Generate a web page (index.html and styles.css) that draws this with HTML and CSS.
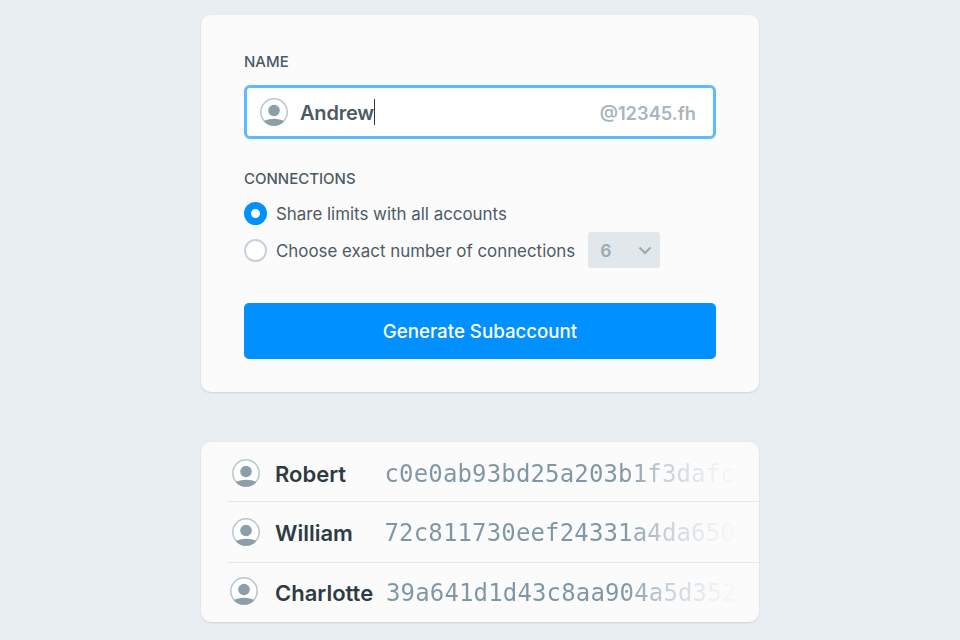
FILE: index.html
```html
<!DOCTYPE html>
<html lang="en">
<head>
  <meta charset="UTF-8">
  <title>Generate Subaccount</title>
  <link rel="stylesheet" href="styles.css">
</head>
<body>

  <div class="card form-card">
    <div class="label">NAME</div>
    <div class="name-field">
      <svg class="avatar" viewBox="0 0 28 28">
        <circle cx="14" cy="14" r="13.2" fill="#fff" stroke="#b8c6ce" stroke-width="1.5"></circle>
        <circle cx="14" cy="12.5" r="5.8" fill="#8c9fa9"></circle>
        <path d="M3.8 23.3 C6 21.5 10 20.7 14 20.7 C18 20.7 22 21.5 24.2 23.3 A13.8 13.8 0 0 1 3.8 23.3 Z" fill="#8c9fa9"></path>
      </svg>
      <span class="name-value">Andrew</span>
      <span class="caret"></span>
      <span class="name-suffix">@12345.fh</span>
    </div>

    <div class="label connections-label">CONNECTIONS</div>
    <div class="option">
      <span class="radio radio-on"></span>
      <span class="option-text">Share limits with all accounts</span>
    </div>
    <div class="option">
      <span class="radio"></span>
      <span class="option-text">Choose exact number of connections</span>
      <div class="select">
        <span>6</span>
        <svg class="chevron" viewBox="0 0 14 9">
          <path d="M1.500 1.500 L7 7 L12.500 1.500" fill="none" stroke="#9aabb5" stroke-width="2.200"></path>
        </svg>
      </div>
    </div>

    <button class="generate">Generate Subaccount</button>
  </div>

  <div class="card list-card">
    <div class="row row-first">
      <svg class="avatar" viewBox="0 0 28 28">
        <circle cx="14" cy="14" r="13.2" fill="#fff" stroke="#b8c6ce" stroke-width="1.5"></circle>
        <circle cx="14" cy="12.5" r="5.8" fill="#8c9fa9"></circle>
        <path d="M3.8 23.3 C6 21.5 10 20.7 14 20.7 C18 20.7 22 21.5 24.2 23.3 A13.8 13.8 0 0 1 3.8 23.3 Z" fill="#8c9fa9"></path>
      </svg>
      <span class="row-name">Robert</span>
      <span class="row-key">c0e0ab93bd25a203b1f3dafc</span>
    </div>
    <div class="row">
      <svg class="avatar" viewBox="0 0 28 28">
        <circle cx="14" cy="14" r="13.2" fill="#fff" stroke="#b8c6ce" stroke-width="1.5"></circle>
        <circle cx="14" cy="12.5" r="5.8" fill="#8c9fa9"></circle>
        <path d="M3.8 23.3 C6 21.5 10 20.7 14 20.7 C18 20.7 22 21.5 24.2 23.3 A13.8 13.8 0 0 1 3.8 23.3 Z" fill="#8c9fa9"></path>
      </svg>
      <span class="row-name">William</span>
      <span class="row-key">72c811730eef24331a4da650</span>
    </div>
    <div class="row row-last">
      <svg class="avatar" viewBox="0 0 28 28">
        <circle cx="14" cy="14" r="13.2" fill="#fff" stroke="#b8c6ce" stroke-width="1.5"></circle>
        <circle cx="14" cy="12.5" r="5.8" fill="#8c9fa9"></circle>
        <path d="M3.8 23.3 C6 21.5 10 20.7 14 20.7 C18 20.7 22 21.5 24.2 23.3 A13.8 13.8 0 0 1 3.8 23.3 Z" fill="#8c9fa9"></path>
      </svg>
      <span class="row-name">Charlotte</span>
      <span class="row-key">39a641d1d43c8aa904a5d352</span>
    </div>
  </div>

</body>
</html>
```

FILE: styles.css
```css
body {
  background: #e9eef3;
  margin: 0;
  height: 640px;
  overflow: hidden;
  display: flex;
  flex-direction: column;
  align-items: center;
  padding-top: 15px;
  box-sizing: border-box;
  font-family: "Inter", "Open Sans", sans-serif;
  color: #4c5a63;
}

.card {
  background: #fbfbfc;
  width: 558px;
  box-sizing: border-box;
  border-radius: 10px;
  box-shadow: 0 1px 2px rgba(120, 140, 155, 0.25);
}

.form-card {
  height: 377px;
  padding: 38px 43px 0;
}

.list-card {
  height: 180px;
  margin-top: 50px;
  padding-left: 26px;
}

.label {
  font-size: 15px;
  font-weight: 500;
  line-height: 18px;
  color: #4c5a63;
}

.name-field {
  display: flex;
  align-items: center;
  height: 54px;
  margin-top: 14px;
  padding: 0 17px 0 13px;
  box-sizing: border-box;
  background: #fff;
  border: 3px solid #5cbaff;
  border-radius: 6px;
}

.avatar {
  width: 28px;
  height: 28px;
  flex-shrink: 0;
}

.name-value {
  margin-left: 12px;
  padding-top: 2px;
  font-size: 20px;
  font-weight: 600;
  letter-spacing: -0.200px;
  color: #4c5a63;
}

.caret {
  width: 1.500px;
  height: 26px;
  background: #2f3a42;
}

.name-suffix {
  margin-left: auto;
  padding-top: 2px;
  font-size: 18.300px;
  font-weight: 600;
  color: #a9b6bd;
}

.connections-label {
  margin-top: 31px;
}

.option {
  display: flex;
  align-items: center;
  gap: 9px;
  height: 36px;
  margin-top: 1px;
  font-size: 16.900px;
}

.option-text {
  padding-top: 2px;
}

.connections-label + .option {
  margin-top: 7px;
}

.radio {
  width: 23px;
  height: 23px;
  box-sizing: border-box;
  border: 2px solid #c6d2da;
  border-radius: 50%;
  background: #fff;
}

.radio-on {
  border: 7.500px solid #0090ff;
}

.select {
  display: flex;
  align-items: center;
  justify-content: space-between;
  width: 72px;
  height: 36px;
  margin-left: 4px;
  padding: 0 8px 0 12px;
  box-sizing: border-box;
  background: #e2e7eb;
  border-radius: 3px;
  font-size: 17.500px;
  font-weight: 600;
  color: #9aabb5;
}

.chevron {
  width: 14px;
  height: 9px;
}

.generate {
  display: block;
  width: 100%;
  height: 56px;
  margin-top: 35px;
  border: none;
  border-radius: 5px;
  background: #0090ff;
  color: #fff;
  font-family: inherit;
  font-size: 18.700px;
  font-weight: 500;
}

.row {
  display: flex;
  align-items: center;
  height: 60px;
  padding-left: 5px;
  border-bottom: 1.500px solid #e2e8ee;
}

.row-first {
  height: 59.500px;
  padding-top: 3px;
  box-sizing: border-box;
}

.row-last {
  border-bottom: none;
  height: 58px;
  padding-left: 3px;
}

.row-last .avatar {
  margin-bottom: 2px;
}

.row-name {
  width: 109.500px;
  margin-left: 15px;
  padding-top: 2px;
  font-size: 22px;
  font-weight: 600;
  color: #2f3b43;
  flex-shrink: 0;
}

.row-last .row-name {
  width: 111px;
  margin-left: 17px;
}

.row-key {
  padding-top: 2px;
  font-family: "DejaVu Sans Mono", monospace;
  font-size: 24px;
  letter-spacing: 0.150px;
  white-space: nowrap;
  width: 350px;
  overflow: hidden;
  color: transparent;
  background: linear-gradient(to right, #7f97a5 68%, #c4d0d7 80%, #eef1f3 94%, #f6f7f8 100%);
  -webkit-background-clip: text;
  background-clip: text;
}
```
